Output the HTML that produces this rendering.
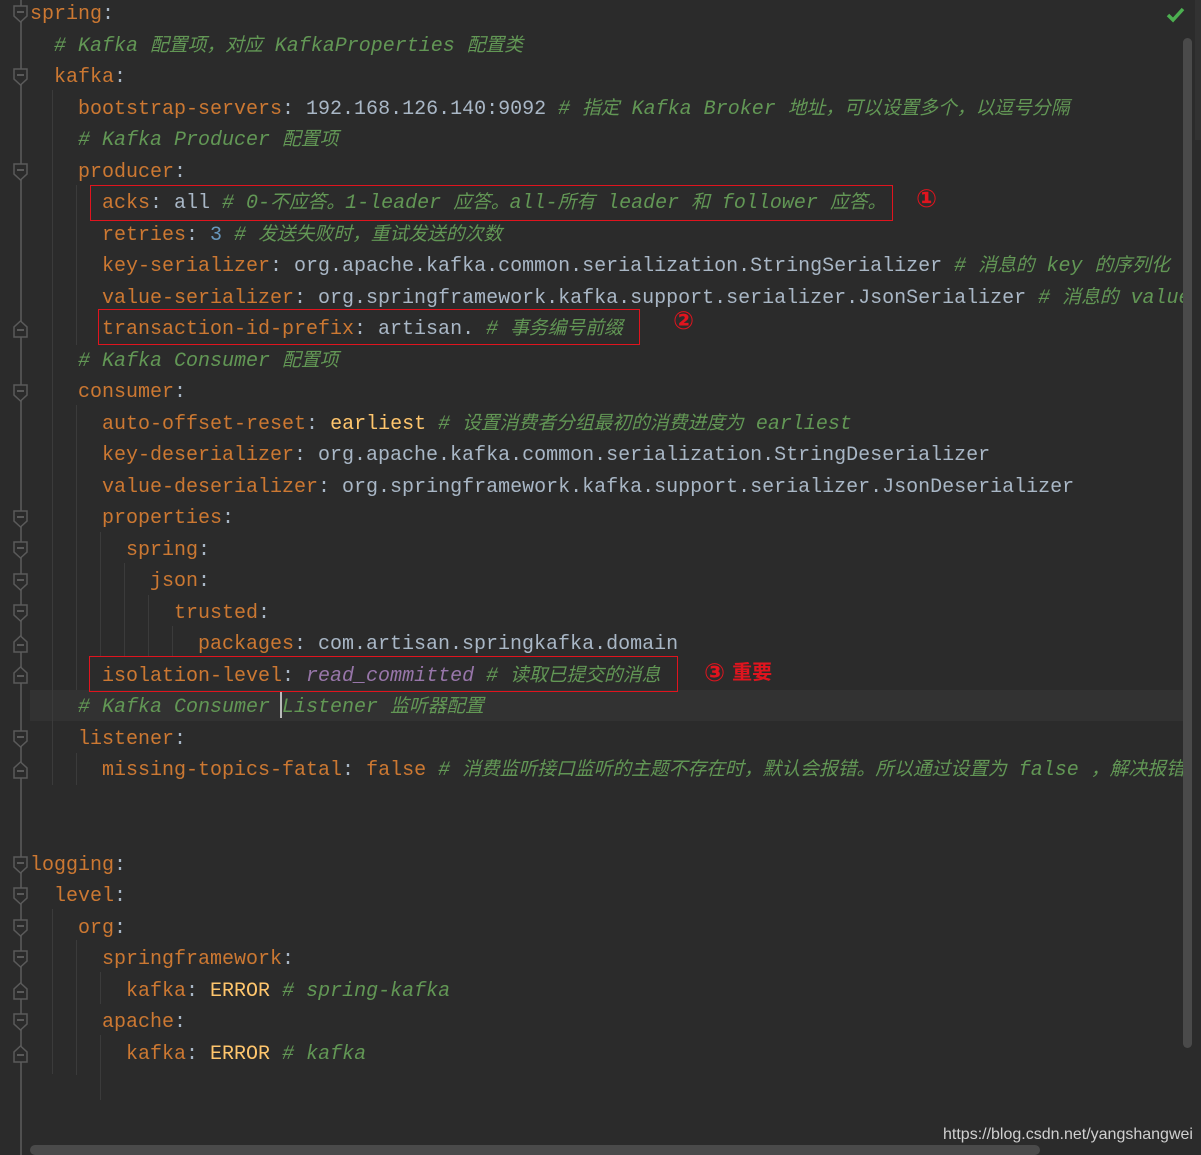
<!DOCTYPE html>
<html><head><meta charset="utf-8"><style>
html,body{margin:0;padding:0;background:#2b2b2b;width:1201px;height:1155px;overflow:hidden;position:relative}
.ed{position:absolute;left:0;top:0;width:1192px;height:1155px;overflow:hidden}
.ln{position:absolute;height:32px;line-height:32px;white-space:pre;font-family:"Liberation Mono","DejaVu Sans Mono","Noto Sans CJK SC",monospace;font-size:20px;color:#a9b7c6}
.k{color:#cc7832}.v{color:#a9b7c6}.n{color:#6897bb}.y{color:#ffc66d}.p{color:#9876aa;font-style:italic}
.c{color:#629755;font-style:italic}
.z{font-family:"Noto Sans CJK SC",sans-serif;font-size:18.8px}
.g{position:absolute;width:1px;background:#3b3b3b}
.box{position:absolute;border:1px solid #e0141e}
</style></head><body>
<div style="position:absolute;left:20px;top:0;width:2px;height:1155px;background:#505050"></div>
<div style="position:absolute;left:30px;top:690px;width:1162px;height:31px;background:#323232"></div>
<div class="g" style="left:52px;top:90px;height:695px"></div>
<div class="g" style="left:76px;top:185px;height:160px"></div>
<div class="g" style="left:76px;top:405px;height:285px"></div>
<div class="g" style="left:100px;top:532px;height:125px"></div>
<div class="g" style="left:124px;top:563px;height:94px"></div>
<div class="g" style="left:148px;top:595px;height:62px"></div>
<div class="g" style="left:172px;top:626px;height:31px"></div>
<div class="g" style="left:76px;top:753px;height:32px"></div>
<div class="g" style="left:52px;top:909px;height:165px"></div>
<div class="g" style="left:76px;top:940px;height:135px"></div>
<div class="g" style="left:100px;top:972px;height:32px"></div>
<div class="g" style="left:100px;top:1035px;height:65px"></div>
<div class="ed">
<div class="ln" style="top:-1px;left:30px"><span class="k">spring</span>:</div>
<div class="ln" style="top:28px;left:54px"><span class="c"># Kafka <span class="z">配置项，对应</span> KafkaProperties <span class="z">配置类</span></span></div>
<div class="ln" style="top:62px;left:54px"><span class="k">kafka</span>:</div>
<div class="ln" style="top:91px;left:78px"><span class="k">bootstrap-servers</span>: 192.168.126.140:9092 <span class="c"># <span class="z">指定</span> Kafka Broker <span class="z">地址，可以设置多个，以逗号分隔</span></span></div>
<div class="ln" style="top:122px;left:78px"><span class="c"># Kafka Producer <span class="z">配置项</span></span></div>
<div class="ln" style="top:157px;left:78px"><span class="k">producer</span>:</div>
<div class="ln" style="top:185px;left:102px"><span class="k">acks</span>: all <span class="c"># 0-<span class="z">不应答。</span>1-leader <span class="z">应答。</span>all-<span class="z">所有</span> leader <span class="z">和</span> follower <span class="z">应答。</span></span></div>
<div class="ln" style="top:217px;left:102px"><span class="k">retries</span>: <span class="n">3</span> <span class="c"># <span class="z">发送失败时，重试发送的次数</span></span></div>
<div class="ln" style="top:248px;left:102px"><span class="k">key-serializer</span>: org.apache.kafka.common.serialization.StringSerializer <span class="c"># <span class="z">消息的</span> key <span class="z">的序列化</span></span></div>
<div class="ln" style="top:280px;left:102px"><span class="k">value-serializer</span>: org.springframework.kafka.support.serializer.JsonSerializer <span class="c"># <span class="z">消息的</span> value</span></div>
<div class="ln" style="top:311px;left:102px"><span class="k">transaction-id-prefix</span>: artisan. <span class="c"># <span class="z">事务编号前缀</span></span></div>
<div class="ln" style="top:343px;left:78px"><span class="c"># Kafka Consumer <span class="z">配置项</span></span></div>
<div class="ln" style="top:377px;left:78px"><span class="k">consumer</span>:</div>
<div class="ln" style="top:406px;left:102px"><span class="k">auto-offset-reset</span>: <span class="y">earliest</span> <span class="c"># <span class="z">设置消费者分组最初的消费进度为</span> earliest</span></div>
<div class="ln" style="top:440px;left:102px"><span class="k">key-deserializer</span>: org.apache.kafka.common.serialization.StringDeserializer</div>
<div class="ln" style="top:472px;left:102px"><span class="k">value-deserializer</span>: org.springframework.kafka.support.serializer.JsonDeserializer</div>
<div class="ln" style="top:503px;left:102px"><span class="k">properties</span>:</div>
<div class="ln" style="top:535px;left:126px"><span class="k">spring</span>:</div>
<div class="ln" style="top:566px;left:150px"><span class="k">json</span>:</div>
<div class="ln" style="top:598px;left:174px"><span class="k">trusted</span>:</div>
<div class="ln" style="top:629px;left:198px"><span class="k">packages</span>: com.artisan.springkafka.domain</div>
<div class="ln" style="top:658px;left:102px"><span class="k">isolation-level</span>: <span class="p">read_committed</span> <span class="c"># <span class="z">读取已提交的消息</span></span></div>
<div class="ln" style="top:689px;left:78px"><span class="c"># Kafka Consumer Listener <span class="z">监听器配置</span></span></div>
<div class="ln" style="top:724px;left:78px"><span class="k">listener</span>:</div>
<div class="ln" style="top:752px;left:102px"><span class="k">missing-topics-fatal</span>: <span class="k">false</span> <span class="c"># <span class="z">消费监听接口监听的主题不存在时，默认会报错。所以通过设置为</span> false <span class="z">，解决报错</span></span></div>
<div class="ln" style="top:850px;left:30px"><span class="k">logging</span>:</div>
<div class="ln" style="top:881px;left:54px"><span class="k">level</span>:</div>
<div class="ln" style="top:913px;left:78px"><span class="k">org</span>:</div>
<div class="ln" style="top:944px;left:102px"><span class="k">springframework</span>:</div>
<div class="ln" style="top:976px;left:126px"><span class="k">kafka</span>: <span class="y">ERROR</span> <span class="c"># spring-kafka</span></div>
<div class="ln" style="top:1007px;left:102px"><span class="k">apache</span>:</div>
<div class="ln" style="top:1039px;left:126px"><span class="k">kafka</span>: <span class="y">ERROR</span> <span class="c"># kafka</span></div>
</div>
<div style="position:absolute;left:280px;top:692px;width:2px;height:26px;background:#bbb"></div>
<div class="box" style="left:90px;top:185px;width:801px;height:34px"></div>
<div class="box" style="left:98px;top:309px;width:540px;height:34px"></div>
<div class="box" style="left:89px;top:656px;width:587px;height:34px"></div>
<div style="position:absolute;left:916px;top:184px;color:#e0141e;font:bold 25px 'DejaVu Sans',sans-serif">①</div>
<div style="position:absolute;left:673px;top:306px;color:#e0141e;font:bold 25px 'DejaVu Sans',sans-serif">②</div>
<div style="position:absolute;left:704px;top:656px;color:#e0141e;font:bold 20px 'DejaVu Sans','Noto Sans CJK SC',sans-serif;white-space:nowrap"><span style="font-size:25px;vertical-align:-2px">③</span> <span style="font-family:'Noto Sans CJK SC',sans-serif">重要</span></div>
<svg style="position:absolute;left:0;top:0" width="30" height="1155">
<g fill="#2b2b2b" stroke="#5a5a5a" stroke-width="1.5">
<path d="M14,6 h13 v10 l-6.5,6 l-6.5,-6 z"/><path d="M14,69 h13 v10 l-6.5,6 l-6.5,-6 z"/><path d="M14,164 h13 v10 l-6.5,6 l-6.5,-6 z"/><path d="M14,385 h13 v10 l-6.5,6 l-6.5,-6 z"/><path d="M14,511 h13 v10 l-6.5,6 l-6.5,-6 z"/><path d="M14,542 h13 v10 l-6.5,6 l-6.5,-6 z"/><path d="M14,574 h13 v10 l-6.5,6 l-6.5,-6 z"/><path d="M14,605 h13 v10 l-6.5,6 l-6.5,-6 z"/><path d="M14,731 h13 v10 l-6.5,6 l-6.5,-6 z"/><path d="M14,857 h13 v10 l-6.5,6 l-6.5,-6 z"/><path d="M14,888 h13 v10 l-6.5,6 l-6.5,-6 z"/><path d="M14,920 h13 v10 l-6.5,6 l-6.5,-6 z"/><path d="M14,951 h13 v10 l-6.5,6 l-6.5,-6 z"/><path d="M14,1014 h13 v10 l-6.5,6 l-6.5,-6 z"/>
<path d="M14,337 h13 v-10 l-6.5,-6 l-6.5,6 z"/><path d="M14,652 h13 v-10 l-6.5,-6 l-6.5,6 z"/><path d="M14,683 h13 v-10 l-6.5,-6 l-6.5,6 z"/><path d="M14,778 h13 v-10 l-6.5,-6 l-6.5,6 z"/><path d="M14,999 h13 v-10 l-6.5,-6 l-6.5,6 z"/><path d="M14,1062 h13 v-10 l-6.5,-6 l-6.5,6 z"/>
</g>
<g stroke="#6a6a6a" stroke-width="1.5">
<path d="M17,12h7M17,75h7M17,170h7M17,391h7M17,517h7M17,548h7M17,580h7M17,611h7M17,737h7M17,863h7M17,894h7M17,926h7M17,957h7M17,1020h7M17,330h7M17,645h7M17,676h7M17,771h7M17,992h7M17,1055h7"/>
</g>
</svg>
<svg style="position:absolute;left:1166px;top:6px" width="20" height="18"><path d="M2,9 l5,5 l10,-11" stroke="#4caf50" stroke-width="3.5" fill="none"/></svg>
<div style="position:absolute;left:1183px;top:38px;width:9px;height:1010px;border-radius:5px;background:#4a4a4a"></div>
<div style="position:absolute;left:1195px;top:0;width:6px;height:140px;background:#323232"></div>
<div style="position:absolute;left:30px;top:1145px;width:1010px;height:10px;border-radius:5px;background:#4a4a4a"></div>
<div style="position:absolute;left:943px;top:1126px;color:#d0d0d0;font:16px 'Liberation Sans',sans-serif;white-space:nowrap">https://blog.csdn.net/yangshangwei</div>
</body></html>
